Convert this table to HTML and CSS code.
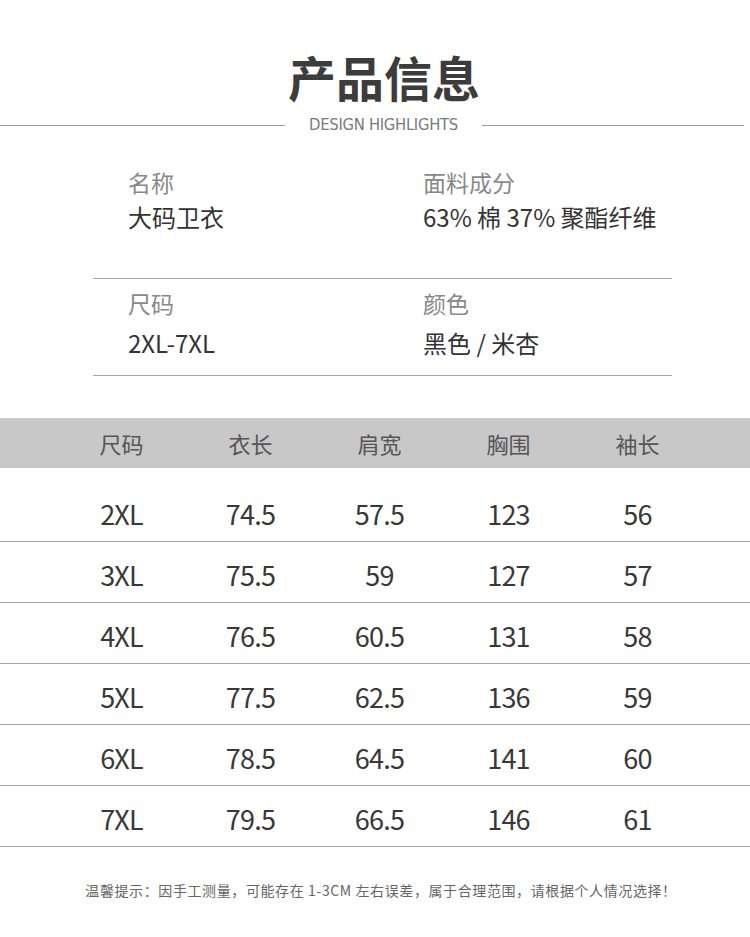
FILE: index.html
```html
<!DOCTYPE html>
<html lang="zh-CN">
<head>
<meta charset="utf-8">
<title>产品信息</title>
<link rel="stylesheet" href="styles.css">
</head>
<body>
<div class="page">
  <h1 class="title">产品信息</h1>
  <div class="subtitle">
    <span class="rule rule-left"></span>
    <span class="sub-text">DESIGN HIGHLIGHTS</span>
    <span class="rule rule-right"></span>
  </div>

  <div class="info">
    <div class="info-row info-row-first">
      <div class="cell cell-left">
        <div class="label">名称</div>
        <div class="value">大码卫衣</div>
      </div>
      <div class="cell">
        <div class="label">面料成分</div>
        <div class="value">63% 棉 37% 聚酯纤维</div>
      </div>
    </div>
    <div class="info-row info-row-second">
      <div class="cell cell-left">
        <div class="label">尺码</div>
        <div class="value value-spaced">2XL-7XL</div>
      </div>
      <div class="cell">
        <div class="label">颜色</div>
        <div class="value value-spaced">黑色 / 米杏</div>
      </div>
    </div>
  </div>

  <div class="size-table">
    <div class="thead">
      <span>尺码</span><span>衣长</span><span>肩宽</span><span>胸围</span><span>袖长</span>
    </div>
    <div class="tbody">
      <div class="trow"><span>2XL</span><span>74.5</span><span>57.5</span><span>123</span><span>56</span></div>
      <div class="trow"><span>3XL</span><span>75.5</span><span>59</span><span>127</span><span>57</span></div>
      <div class="trow"><span>4XL</span><span>76.5</span><span>60.5</span><span>131</span><span>58</span></div>
      <div class="trow"><span>5XL</span><span>77.5</span><span>62.5</span><span>136</span><span>59</span></div>
      <div class="trow"><span>6XL</span><span>78.5</span><span>64.5</span><span>141</span><span>60</span></div>
      <div class="trow"><span>7XL</span><span>79.5</span><span>66.5</span><span>146</span><span>61</span></div>
    </div>
  </div>

  <p class="note">温馨提示：因手工测量，可能存在 1-3CM 左右误差，属于合理范围，请根据个人情况选择！</p>
</div>
</body>
</html>
```

FILE: styles.css
```css
* {
  box-sizing: border-box;
}

html, body {
  margin: 0;
  padding: 0;
  background: #ffffff;
}

body {
  font-family: "Noto Sans CJK SC", "Noto Sans", sans-serif;
  color: #333333;
}

.page {
  width: 750px;
  height: 937px;
  padding-top: 48px;
  overflow: hidden;
}

.title {
  margin: 0;
  padding-left: 18px;
  text-align: center;
  font-size: 48px;
  line-height: 56px;
  font-weight: 700;
  color: #3c3c3c;
}

.subtitle {
  display: flex;
  align-items: center;
  margin-top: 12px;
  height: 18px;
}

.rule {
  height: 1px;
  background: #9a9a9a;
}

.rule-left {
  width: 285px;
}

.rule-right {
  width: 262px;
}

.sub-text {
  width: 197px;
  text-align: center;
  font-family: "DejaVu Sans Condensed", sans-serif;
  font-size: 16.5px;
  line-height: 18px;
  color: #7a7a7a;
  letter-spacing: -0.3px;
}

.info {
  margin: 32px 78px 0 93px;
}

.info-row {
  display: grid;
  grid-template-columns: 330px 1fr;
  border-bottom: 1px solid #a8a8a8;
}

.info-row-first {
  height: 113px;
}

.info-row-second {
  padding-top: 8px;
  height: 97px;
}

.cell-left {
  padding-left: 35px;
}

.label {
  font-size: 23px;
  line-height: 32px;
  color: #888888;
}

.value {
  margin-top: 3px;
  font-size: 24px;
  line-height: 32px;
  color: #333333;
}

.value-spaced {
  margin-top: 8px;
}

.size-table {
  margin-top: 42px;
}

.thead,
.trow {
  display: grid;
  grid-template-columns: repeat(5, 129px);
  padding-left: 57px;
}

.thead {
  height: 50px;
  align-items: center;
  background: #c8c8c8;
  color: #555555;
  font-size: 22px;
}

.thead span,
.trow span {
  text-align: center;
}

.tbody {
  padding-top: 13px;
}

.trow {
  height: 61px;
  padding-top: 16px;
  border-bottom: 1px solid #a8a8a8;
  font-size: 27px;
  line-height: 34px;
  color: #383838;
  letter-spacing: -0.8px;
}

.note {
  margin: 33px 0 0;
  padding-left: 12px;
  text-align: center;
  font-size: 14px;
  line-height: 20px;
  color: #666666;
  letter-spacing: 0.6px;
}
```
